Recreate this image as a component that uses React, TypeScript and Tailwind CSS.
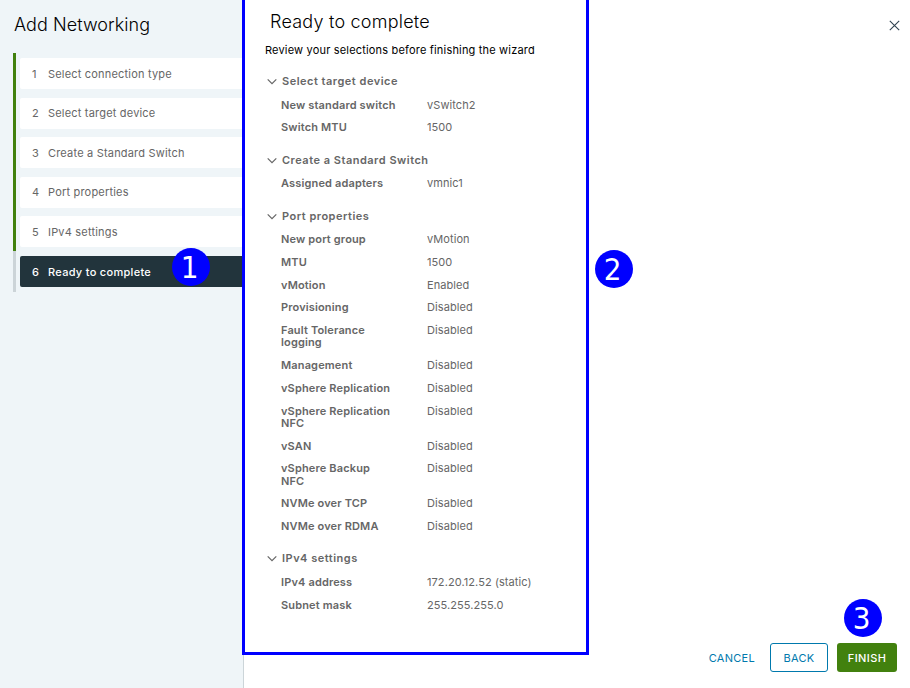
import React from "react";

type Row = { label: React.ReactNode; value: string; h: string };
type Group = { title: string; pad: string; head: string; rows: Row[] };

const steps = [
  "Select connection type",
  "Select target device",
  "Create a Standard Switch",
  "Port properties",
  "IPv4 settings",
];

const h22 = "h-[22px] leading-[12px]";
const h23 = "h-[23px] leading-[12px]";
const h35 = "h-[35px] leading-[12.3px]";

const groups: Group[] = [
  {
    title: "Select target device",
    pad: "pt-0",
    head: "h-[24px]",
    rows: [
      { label: "New standard switch", value: "vSwitch2", h: h22 },
      { label: "Switch MTU", value: "1500", h: h23 },
    ],
  },
  {
    title: "Create a Standard Switch",
    pad: "pt-[10px]",
    head: "h-[23px]",
    rows: [{ label: "Assigned adapters", value: "vmnic1", h: h23 }],
  },
  {
    title: "Port properties",
    pad: "pt-[10px]",
    head: "h-[23px]",
    rows: [
      { label: "New port group", value: "vMotion", h: h23 },
      { label: "MTU", value: "1500", h: h23 },
      { label: "vMotion", value: "Enabled", h: h22 },
      { label: "Provisioning", value: "Disabled", h: h23 },
      { label: <>Fault Tolerance<br />logging</>, value: "Disabled", h: h35 },
      { label: "Management", value: "Disabled", h: h23 },
      { label: "vSphere Replication", value: "Disabled", h: h23 },
      { label: <>vSphere Replication<br />NFC</>, value: "Disabled", h: h35 },
      { label: "vSAN", value: "Disabled", h: h22 },
      { label: <>vSphere Backup<br />NFC</>, value: "Disabled", h: "h-[35px] leading-[12.6px]" },
      { label: "NVMe over TCP", value: "Disabled", h: h23 },
      { label: "NVMe over RDMA", value: "Disabled", h: h23 },
    ],
  },
  {
    title: "IPv4 settings",
    pad: "pt-[9px]",
    head: "h-[24px]",
    rows: [
      { label: "IPv4 address", value: "172.20.12.52 (static)", h: h23 },
      { label: "Subnet mask", value: "255.255.255.0", h: h23 },
    ],
  },
];

function Marker({ n, place }: { n: number; place: string }) {
  return (
    <div
      className={`absolute z-10 flex h-[38px] w-[38px] items-center justify-center rounded-full bg-[#0000ff] pr-[3px] font-['DejaVu_Sans',sans-serif] text-[31px] leading-none text-white [font-stretch:condensed] ${place}`}
    >
      {n}
    </div>
  );
}

function Sidebar() {
  return (
    <aside className="flex h-full w-[244px] shrink-0 flex-col border-r border-[#ccd5d9] bg-[#eff5f8]">
      <h1 className="mt-[13px] pl-[14px] text-[18px] font-light leading-[24px] tracking-[0.05px] text-black">Add Networking</h1>
      <div className="mt-[16px] flex pl-[13px]">
        <div className="h-[239px] w-[3px] shrink-0 bg-[#ccd4d8]">
          <div className="h-[198px] bg-[#42810e]" />
        </div>
        <ol className="ml-[4px] mt-[5px] flex grow flex-col gap-[8.55px] text-[11px] tracking-[0.19px] text-[#666]">
          {steps.map((s, i) => (
            <li key={s} className="flex h-[31px] items-center rounded-l-[2px] bg-white pl-[12px] pt-[1px]">
              <span className="w-[16px]">{i + 1}</span>
              <span>{s}</span>
            </li>
          ))}
          <li className="flex h-[31px] items-center rounded-l-[2px] bg-[#22343c] pl-[12px] pt-[2px] font-medium text-white">
            <span className="w-[16px]">6</span>
            <span className="tracking-[0.3px]">Ready to complete</span>
          </li>
        </ol>
      </div>
    </aside>
  );
}

function Section({ group }: { group: Group }) {
  return (
    <section className={group.pad}>
      <h3 className={`flex items-start font-semibold leading-[13px] tracking-[0.5px] ${group.head}`}>
        <svg className="mr-[5px] mt-[3px] h-[8px] w-[10px]" viewBox="0 0 10 8" fill="none" stroke="#666" strokeWidth="1.2">
          <path d="M0.7 1.4 5 5.6 9.3 1.4" />
        </svg>
        {group.title}
      </h3>
      <dl className="pl-[14px]">
        {group.rows.map((r, i) => (
          <div key={i} className={`flex items-start ${r.h}`}>
            <dt className="w-[146px] shrink-0 font-semibold tracking-[0.15px]">{r.label}</dt>
            <dd className="tracking-[0.08px]">{r.value}</dd>
          </div>
        ))}
      </dl>
    </section>
  );
}

export default function App() {
  return (
    <div className="relative flex h-[688px] w-[910px] overflow-hidden bg-white font-['Inter',sans-serif] text-[11px] text-[#666]">
      <Sidebar />
      <main className="flex grow flex-col">
        <header className="flex h-[34px] items-start justify-between pl-[26px] pr-[10px]">
          <h2 className="mt-[10px] text-[18px] font-light leading-[24px] tracking-[0.22px] text-black">Ready to complete</h2>
          <svg className="mt-[20px] h-[11px] w-[11px]" viewBox="0 0 11 11" stroke="#314351" strokeWidth="1.1">
            <path d="M0.8 0.8 10.2 10.2M10.2 0.8 0.8 10.2" />
          </svg>
        </header>
        <p className="mt-[9px] pl-[21px] leading-[14px] tracking-[0.18px] text-black">Review your selections before finishing the wizard</p>
        <div className="mt-[18px] pl-[23px]">
          {groups.map((g) => (
            <Section key={g.title} group={g} />
          ))}
        </div>
        <footer className="mb-[16px] mt-auto flex items-center justify-end pr-[13px] text-[11px] text-[#0079ad]">
          <button className="mr-[15px] pt-[2px] tracking-[0.3px]">CANCEL</button>
          <button className="mr-[9px] h-[29px] w-[58px] rounded-[3px] border border-[#0079ad] pt-[2px] tracking-[0.3px]">BACK</button>
          <button className="h-[29px] w-[60px] rounded-[3px] bg-[#42810e] pt-[2px] font-medium tracking-[0.4px] text-white">FINISH</button>
        </footer>
      </main>
      <div className="pointer-events-none absolute left-[242px] top-0 h-[655px] w-[347px] border-x-[3px] border-b-[3px] border-[#0000ff]" />
      <Marker n={1} place="left-[172px] top-[248px]" />
      <Marker n={2} place="left-[595px] top-[250px]" />
      <Marker n={3} place="left-[844px] top-[599px]" />
    </div>
  );
}
